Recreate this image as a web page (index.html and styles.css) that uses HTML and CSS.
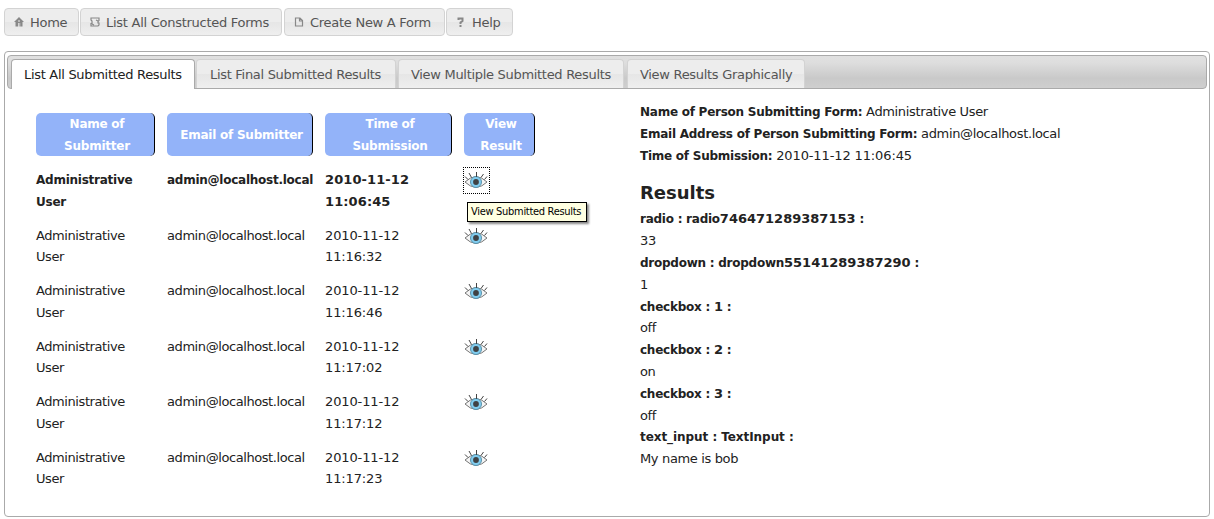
FILE: index.html
```html
<!DOCTYPE html>
<html lang="en">
<head>
<meta charset="utf-8">
<title>Submitted Results</title>
<link rel="stylesheet" href="styles.css">
</head>
<body>
<svg class="defs" width="0" height="0">
  <symbol id="eye" viewBox="0 0 24 18">
    <path d="M1 10 Q6 5 12 4.500 Q18 5 23 10 Q18 15 12 15.500 Q6 15 1 10Z" fill="#f4f4f4" stroke="#777" stroke-width="1"/>
    <circle cx="12" cy="10" r="5.500" fill="#80cdf0" stroke="#5c93ab" stroke-width="1"/>
    <circle cx="12" cy="10" r="2.900" fill="#3f4245"/>
    <path d="M12.500 0V5M5 1L7.500 5.500M19.500 2L17 5.500M1 4.500L4 7.500M23 4.500L20.500 7.500" fill="none" stroke="#444" stroke-width="1"/>
  </symbol>
</svg>
<nav class="toolbar">
  <a class="button home"><svg class="icon" viewBox="0 0 10 10"><path fill-rule="evenodd" d="M5 0L10 5H8.500V9.500H1.500V5H0ZM4 6V9.500H4.800V6ZM5.500 6V9.500H6.200V6ZM4 3.500V4.500H6V3.500Z"/></svg><span>Home</span></a>
  <a class="button list"><svg class="icon outline" viewBox="0 0 10 10"><path d="M2 1H9V3.500L8 4.500V6H9V8L8 9H1V6.500H2V4L1 3V1H2M2 7L4 8M6 3L8 4"/></svg><span>List All Constructed Forms</span></a>
  <a class="button create"><svg class="icon outline" viewBox="0 0 10 10"><path d="M1.500 1H6L8.500 3.500V9H1.500ZM5.500 1V4H8.500"/></svg><span>Create New A Form</span></a>
  <a class="button help"><svg class="icon outline question" viewBox="0 0 10 10"><path d="M2.500 3V1.500H6.500V4L4.500 5.500V7M4.500 8V10"/></svg><span>Help</span></a>
</nav>
<main class="panel">
  <div class="tabs">
    <a class="tab active"><span>List All Submitted Results</span></a>
    <a class="tab final"><span>List Final Submitted Results</span></a>
    <a class="tab multiple"><span>View Multiple Submitted Results</span></a>
    <a class="tab graph"><span>View Results Graphically</span></a>
  </div>
  <div class="content">
    <section class="submissions">
      <div class="row head">
        <div>Name of<br>Submitter</div><div>Email of Submitter</div><div>Time of<br>Submission</div><div>View<br>Result</div>
      </div>
      <div class="row current">
        <div class="label">Administrative<br>User</div><div class="label">admin@localhost.local</div><div class="date">2010-11-12<br>11:06:45</div>
        <div class="view"><span class="focus"><svg class="eye"><use href="#eye"/></svg></span><span class="tooltip">View Submitted Results</span></div>
      </div>
      <div class="row"><div>Administrative<br>User</div><div>admin@localhost.local</div><div class="date">2010-11-12<br>11:16:32</div><div class="view"><svg class="eye"><use href="#eye"/></svg></div></div>
      <div class="row"><div>Administrative<br>User</div><div>admin@localhost.local</div><div class="date">2010-11-12<br>11:16:46</div><div class="view"><svg class="eye"><use href="#eye"/></svg></div></div>
      <div class="row"><div>Administrative<br>User</div><div>admin@localhost.local</div><div class="date">2010-11-12<br>11:17:02</div><div class="view"><svg class="eye"><use href="#eye"/></svg></div></div>
      <div class="row"><div>Administrative<br>User</div><div>admin@localhost.local</div><div class="date">2010-11-12<br>11:17:12</div><div class="view"><svg class="eye"><use href="#eye"/></svg></div></div>
      <div class="row"><div>Administrative<br>User</div><div>admin@localhost.local</div><div class="date">2010-11-12<br>11:17:23</div><div class="view"><svg class="eye"><use href="#eye"/></svg></div></div>
    </section>
    <section class="details">
      <p><b>Name of Person Submitting Form:</b> Administrative User</p>
      <p><b>Email Address of Person Submitting Form:</b> admin@localhost.local</p>
      <p><b>Time of Submission:</b> <span class="date">2010-11-12 11:06:45</span></p>
      <h2>Results</h2>
      <p><b>radio : radio<span class="digits">746471289387153</span> :</b></p>
      <p>33</p>
      <p><b>dropdown : dropdown<span class="digits">55141289387290</span> :</b></p>
      <p>1</p>
      <p><b>checkbox : <span class="digits">1</span> :</b></p>
      <p>off</p>
      <p><b>checkbox : <span class="digits">2</span> :</b></p>
      <p>on</p>
      <p><b>checkbox : <span class="digits">3</span> :</b></p>
      <p>off</p>
      <p><b class="field">text_input : TextInput :</b></p>
      <p>My name is bob</p>
    </section>
  </div>
</main>
</body>
</html>
```
FILE: styles.css
```css
* { box-sizing: border-box; }
body { margin: 0; padding: 8px 4px 0; height: 519px; overflow: hidden; background: #fff; color: #222; font: 13px/21.7px "DejaVu Sans", Verdana, sans-serif; }
.defs { display: block; height: 0; }
.toolbar { display: flex; height: 28px; letter-spacing: -.27px; }
.button { display: flex; align-items: center; height: 28px; padding-left: 9px; border: 1px solid #d3d3d3; border-radius: 4px; background: linear-gradient(#ededed 0 48%, #e6e6e6 52%, #efefef); color: #555; white-space: nowrap; }
.button span { padding-top: 1px; }
.home { width: 75px; margin-right: 1px; }
.list { width: 202px; margin-right: 2px; }
.create { width: 161px; margin-right: 1px; }
.help { width: 67px; }
.icon { flex: none; width: 10px; height: 10px; margin-right: 6px; fill: #888; }
.outline { fill: none; stroke: #888; stroke-width: 1.2; }
.question { stroke-width: 2; }
.panel { height: 466px; margin-top: 15px; padding: 3px 2px; border: 1px solid #aaa; border-radius: 4px; }
.tabs { display: flex; align-items: flex-end; height: 34px; padding-left: 3px; border: 1px solid #aaa; border-radius: 4px; background: linear-gradient(#e0e0e0, #dedede 20%, #c9c9c9 70%, #cfcfcf); letter-spacing: -.3px; }
.tab { height: 29px; padding: 4px 0 0 12px; border: 1px solid #d3d3d3; border-bottom: 0; border-radius: 4px 4px 0 0; background: linear-gradient(#ededed 0 48%, #e6e6e6 52%, #efefef); color: #555; white-space: nowrap; }
.tab.active { width: 184px; height: 30px; margin: 0 1px -1px 0; border-color: #aaa; background: #fff; color: #212121; }
.final { width: 200px; margin-right: 2px; padding-left: 13px; }
.multiple { width: 226px; margin-right: 3px; padding-left: 12px; }
.graph { width: 178px; padding-left: 12px; }
.content { display: flex; }
.submissions { flex: none; width: 633px; padding: 24px 0 0 29px; letter-spacing: -.42px; }
.row { display: grid; grid-template-columns: 119px 146px 127px 71px; column-gap: 12px; height: 55.5px; white-space: nowrap; }
.head { height: 56px; color: #fff; font-size: 12px; font-weight: bold; text-align: center; letter-spacing: -.24px; }
.head > div { display: flex; align-items: center; justify-content: center; height: 43px; padding: 2px 0 0 4px; border-right: 1px solid #000; border-radius: 5px; background: #93b3f9; }
.current { font-size: 12px; font-weight: bold; letter-spacing: -.25px; }
.current .label { padding-top: 1px; }
.date { letter-spacing: -.12px; }
.current .date { font-size: 13px; letter-spacing: .1px; }
.view { position: relative; padding-top: 3px; }
.eye { display: block; width: 24px; height: 18px; }
.focus { display: block; width: 27px; height: 27px; margin: -5px 0 0 -1px; padding: 4px 0 0 0; border: 1px dotted #000; }
.tooltip { position: absolute; left: 3px; top: 33px; width: 120px; height: 20px; padding-left: 3px; border: 1px solid #000; background: #ffffe1; box-shadow: 2px 2px 2px #888; color: #000; font: 11px/18px "DejaVu Sans Condensed", Tahoma, sans-serif; letter-spacing: -.3px; }
.details { padding-top: 12px; line-height: 21.8px; white-space: nowrap; letter-spacing: -.35px; }
.details b { font-size: 12px; letter-spacing: -.25px; }
.details .digits { font-size: 13px; letter-spacing: 0; }
.details .field { letter-spacing: -.06px; }
.details p { height: 21.8px; margin: 0; }
.details h2 { margin: 16px 0 4px; font-size: 18px; line-height: 22px; letter-spacing: 0; }
```
